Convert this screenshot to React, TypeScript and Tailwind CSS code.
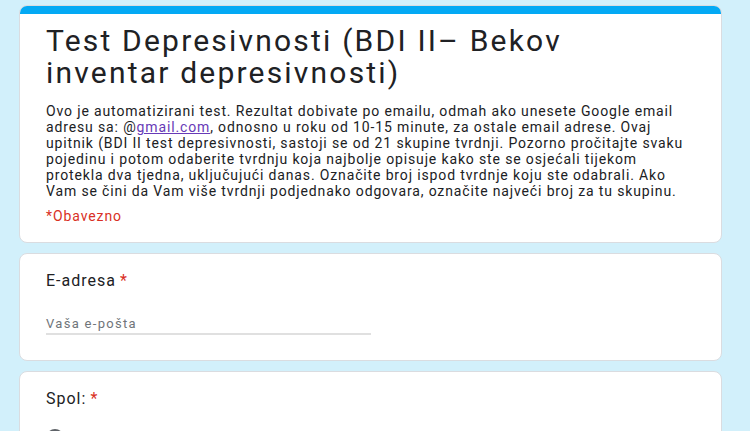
import React from "react";

/* ================= FORM CARDS ================= */

const Card: React.FC<{ className?: string; children: React.ReactNode }> = ({ className = "", children }) => (
  <div className={`bg-white border border-[#dadce0] rounded-lg ${className}`}>{children}</div>
);

const Required = () => <span className="text-[#d93025] ml-1">*</span>;

const App: React.FC = () => {
  return (
    <div
      className="min-h-screen h-[431px] overflow-hidden bg-[#d2f0fb] pl-[19px] pr-[28px] pt-[5px] text-[#202124]"
      style={{ fontFamily: "Roboto, 'Noto Sans', Arial, sans-serif" }}
    >
      <div className="flex flex-col gap-[10px]">
        {/* Header */}
        <div className="rounded-lg overflow-hidden border border-[#dadce0] bg-white">
          <div className="h-[8px] bg-[#03a9f4]" />
          <div className="px-[26px] pt-[11px] pb-[18px]">
            <h1 className="text-[30px] leading-[32px] tracking-[2.2px] font-normal whitespace-nowrap">
              Test Depresivnosti (BDI II– Bekov
              <br />
              inventar depresivnosti)
            </h1>
            <p className="mt-[14px] text-[14px] leading-[16px] tracking-[0.86px] whitespace-nowrap">
              Ovo je automatizirani test. Rezultat dobivate po emailu, odmah ako unesete Google email
              <br />
              adresu sa: @
              <a href="#" className="text-[#673ab7] underline">
                gmail.com
              </a>
              , odnosno u roku od 10-15 minute, za ostale email adrese. Ovaj
              <br />
              upitnik (BDI II test depresivnosti, sastoji se od 21 skupine tvrdnji. Pozorno pročitajte svaku
              <br />
              pojedinu i potom odaberite tvrdnju koja najbolje opisuje kako ste se osjećali tijekom
              <br />
              protekla dva tjedna, uključujući danas. Označite broj ispod tvrdnje koju ste odabrali. Ako
              <br />
              Vam se čini da Vam više tvrdnji podjednako odgovara, označite najveći broj za tu skupinu.
            </p>
            <div className="mt-[9px] text-[14px] leading-[16px] tracking-[0.9px] text-[#d93025]">*Obavezno</div>
          </div>
        </div>

        {/* E-adresa */}
        <Card className="px-[26px] pt-[17px] pb-[25px]">
          <div className="text-[16px] leading-[20px] tracking-[1px]">
            E-adresa
            <Required />
          </div>
          <div className="mt-[25px] w-[325px] border-b-2 border-[#e0e0e0] pb-[1px]">
            <div className="text-[13px] leading-[16px] tracking-[1.3px] text-[#70757a]">Vaša e-pošta</div>
          </div>
        </Card>

        {/* Spol */}
        <Card className="px-[26px] pt-[17px] pb-[25px]">
          <div className="text-[16px] leading-[20px] tracking-[1px]">
            Spol:
            <Required />
          </div>
          <div className="mt-[18px] flex items-center gap-3">
            <span className="w-[18px] h-[18px] rounded-full border-2 border-[#5f6368]" />
            <span className="text-[14px] tracking-[0.8px]">Muško</span>
          </div>
        </Card>
      </div>
    </div>
  );
};

export default App;
